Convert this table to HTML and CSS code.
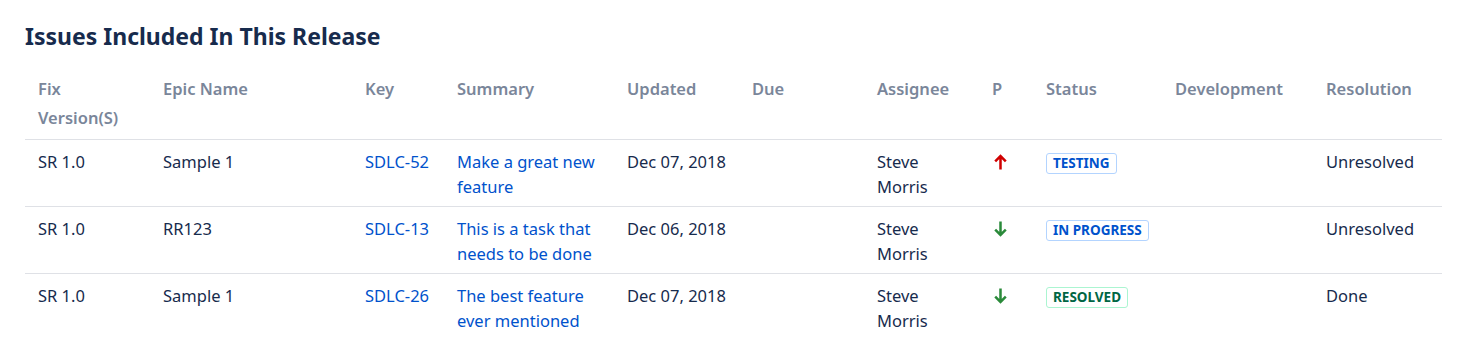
FILE: index.html
```html
<!DOCTYPE html>
<html lang="en">
<head>
    <meta charset="UTF-8">
    <meta name="viewport" content="width=device-width, initial-scale=1.0">
    <title>Release Issues</title>
    <link rel="stylesheet" href="styles.css">
</head>
<body>
    <div class="release-page">
        <h2 class="release-title">Issues Included In This Release</h2>

        <table class="issues-table">
            <colgroup>
                <col style="width: 125px">
                <col style="width: 202px">
                <col style="width: 92px">
                <col style="width: 170px">
                <col style="width: 125px">
                <col style="width: 125px">
                <col style="width: 115px">
                <col style="width: 54px">
                <col style="width: 129px">
                <col style="width: 151px">
                <col style="width: 129px">
            </colgroup>
            <thead>
                <tr>
                    <th>Fix Version(S)</th>
                    <th>Epic Name</th>
                    <th>Key</th>
                    <th>Summary</th>
                    <th>Updated</th>
                    <th>Due</th>
                    <th>Assignee</th>
                    <th>P</th>
                    <th>Status</th>
                    <th>Development</th>
                    <th>Resolution</th>
                </tr>
            </thead>
            <tbody>
                <tr>
                    <td>SR 1.0</td>
                    <td>Sample 1</td>
                    <td><a href="#">SDLC-52</a></td>
                    <td><a href="#">Make a great new feature</a></td>
                    <td>Dec 07, 2018</td>
                    <td></td>
                    <td>Steve Morris</td>
                    <td>
                        <!-- prioritas tinggi -->
                        <svg class="priority" width="13" height="16" viewBox="0 0 13 16">
                            <path d="M6.5 15.5V2M1.2 7.3L6.5 2l5.3 5.3" fill="none" stroke="#d00000" stroke-width="2.5"/>
                        </svg>
                    </td>
                    <td><span class="lozenge lozenge-blue">Testing</span></td>
                    <td></td>
                    <td>Unresolved</td>
                </tr>
                <tr>
                    <td>SR 1.0</td>
                    <td>RR123</td>
                    <td><a href="#">SDLC-13</a></td>
                    <td><a href="#">This is a task that needs to be done</a></td>
                    <td>Dec 06, 2018</td>
                    <td></td>
                    <td>Steve Morris</td>
                    <td>
                        <svg class="priority" width="13" height="16" viewBox="0 0 13 16">
                            <path d="M6.5 0.5V14M1.2 8.7L6.5 14l5.3-5.3" fill="none" stroke="#2a8a3a" stroke-width="2.5"/>
                        </svg>
                    </td>
                    <td><span class="lozenge lozenge-blue">In Progress</span></td>
                    <td></td>
                    <td>Unresolved</td>
                </tr>
                <tr>
                    <td>SR 1.0</td>
                    <td>Sample 1</td>
                    <td><a href="#">SDLC-26</a></td>
                    <td><a href="#">The best feature ever mentioned</a></td>
                    <td>Dec 07, 2018</td>
                    <td></td>
                    <td>Steve Morris</td>
                    <td>
                        <svg class="priority" width="13" height="16" viewBox="0 0 13 16">
                            <path d="M6.5 0.5V14M1.2 8.7L6.5 14l5.3-5.3" fill="none" stroke="#2a8a3a" stroke-width="2.5"/>
                        </svg>
                    </td>
                    <td><span class="lozenge lozenge-green">Resolved</span></td>
                    <td></td>
                    <td>Done</td>
                </tr>
            </tbody>
        </table>
    </div>
</body>
</html>
```

FILE: styles.css
```css
body {
    margin: 0;
    background: #fff;
    color: #172b4d;
    font-family: "Noto Sans", "Open Sans", sans-serif;
}
.release-page {
    padding: 20px 24px 0 25px;
}
.release-title {
    margin: 0 0 15px;
    font-size: 23px;
    line-height: 32px;
    font-weight: bold;
    color: #172b4d;
}
.issues-table {
    border-collapse: collapse;
    table-layout: fixed;
    width: 1417px;
    font-size: 16.5px;
}
.issues-table th {
    text-align: left;
    vertical-align: top;
    font-weight: 600;
    color: #7a869a;
    line-height: 29px;
    padding: 7px 10px 7px 13px;
    border-bottom: 1px solid #dfe1e6;
}
.issues-table td {
    vertical-align: top;
    line-height: 25px;
    padding: 9px 10px 7px 13px;
    border-bottom: 1px solid #dfe1e6;
}
.issues-table tbody tr:last-child td {
    border-bottom: none;
}
.issues-table a {
    color: #0052cc;
    text-decoration: none;
}
.priority {
    display: block;
    margin: 5px 0 0 2px;
}
.lozenge {
    display: inline-block;
    margin-top: 3px;
    padding: 0 6px;
    border: 1px solid;
    border-radius: 3px;
    font-size: 13.5px;
    line-height: 19px;
    font-weight: bold;
    text-transform: uppercase;
}
.lozenge-blue {
    color: #0052cc;
    border-color: #b3d4ff;
}
.lozenge-green {
    color: #006644;
    border-color: #abf5d1;
}
```
